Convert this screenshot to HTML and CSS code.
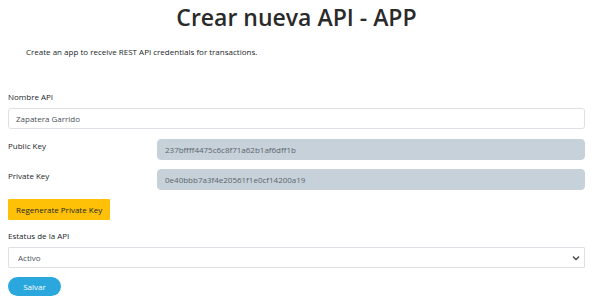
FILE: index.html
```html
<!DOCTYPE html>
<html lang="es">
<head>
    <meta charset="UTF-8">
    <meta name="viewport" content="width=device-width, initial-scale=1.0">
    <title>Crear nueva API - APP</title>
    <link rel="stylesheet" href="styles.css">
</head>
<body>
    <h1 class="page-title">Crear nueva API - APP</h1>
    <p class="intro">Create an app to receive REST API credentials for transactions.</p>

    <form class="api-form">
        <div class="form-group">
            <label for="apiName">Nombre API</label>
            <input type="text" id="apiName" class="form-control" value="Zapatera Garrido">
        </div>

        <div class="key-row">
            <label for="publicKey">Public Key</label>
            <input type="text" id="publicKey" class="form-control key-field" value="237bffff4475c6c8f71a62b1af6dff1b" readonly>
        </div>
        <div class="key-row">
            <label for="privateKey">Private Key</label>
            <input type="text" id="privateKey" class="form-control key-field" value="0e40bbb7a3f4e20561f1e0cf14200a19" readonly>
        </div>

        <button type="button" class="btn-regenerate">Regenerate Private Key</button>

        <div class="form-group">
            <label for="apiStatus">Estatus de la API</label>
            <div class="select-wrap">
                <select id="apiStatus" class="form-control">
                    <option>Activo</option>
                    <option>Inactivo</option>
                </select>
                <svg class="chevron" width="8" height="6" viewBox="0 0 8 6"><path d="M1 1.5 L4 4.5 L7 1.5" fill="none" stroke="#444" stroke-width="1.3"/></svg>
            </div>
        </div>

        <button type="submit" class="btn-save">Salvar</button>
    </form>
</body>
</html>
```

FILE: styles.css
```css
body {
    font-family: "Open Sans", "Noto Sans", sans-serif;
    margin: 0;
    padding: 0 7px 0 8px;
    background-color: #fff;
    color: #212529;
    font-size: 8px;
}
.page-title {
    text-align: center;
    font-size: 23px;
    font-weight: 600;
    color: #2a2a2a;
    margin: 0;
    padding-top: 2px;
    line-height: 30px;
}
.intro {
    margin: 13px 0 0 18px;
    line-height: 14px;
}
.api-form {
    margin-top: 32px;
}
label {
    display: block;
    line-height: 12px;
}
.form-group label {
    margin-bottom: 5px;
}
.form-control {
    display: block;
    width: 100%;
    box-sizing: border-box;
    height: 21px;
    padding: 0 7px;
    font-family: inherit;
    font-size: 8px;
    color: #495057;
    background-color: #fff;
    border: 1px solid #dde1e5;
    border-radius: 3px;
}
.key-row {
    display: grid;
    grid-template-columns: 149px 1fr;
    align-items: start;
    margin-top: 10px;
}
.key-row + .key-row {
    margin-top: 9px;
}
.key-row label {
    padding-top: 1px;
}
.key-field {
    background-color: #c6d1d9;
    border-color: #c6d1d9;
    border-radius: 4px;
    color: #5d656b;
}
.btn-regenerate {
    display: block;
    margin-top: 9px;
    height: 21px;
    padding: 0 8px;
    border: none;
    border-radius: 1px;
    background-color: #ffc107;
    color: #212529;
    font-family: inherit;
    font-size: 8px;
    cursor: pointer;
}
.btn-regenerate + .form-group {
    margin-top: 10px;
}
.select-wrap {
    position: relative;
}
.select-wrap select {
    appearance: none;
    padding-left: 9px;
    border-radius: 1px;
}
.chevron {
    position: absolute;
    right: 5px;
    top: 8px;
    pointer-events: none;
}
.btn-save {
    display: block;
    margin-top: 9px;
    width: 53px;
    height: 19px;
    border: none;
    border-radius: 10px;
    background-color: #2aa7dc;
    color: #fff;
    font-family: inherit;
    font-size: 8px;
    cursor: pointer;
}
```
